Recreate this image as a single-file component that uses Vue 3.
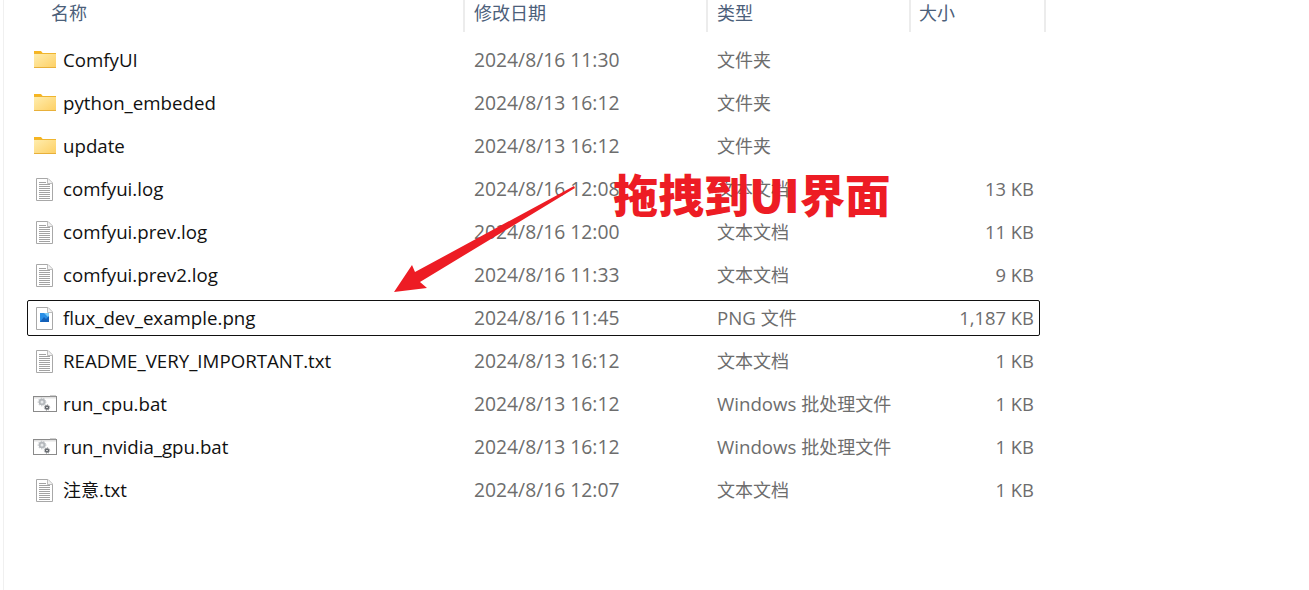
<script setup>
const files = [
  { name: 'ComfyUI', date: '2024/8/16 11:30', type: '文件夹', size: '', icon: 'folder' },
  { name: 'python_embeded', date: '2024/8/13 16:12', type: '文件夹', size: '', icon: 'folder' },
  { name: 'update', date: '2024/8/13 16:12', type: '文件夹', size: '', icon: 'folder' },
  { name: 'comfyui.log', date: '2024/8/16 12:08', type: '文本文档', size: '13 KB', icon: 'text' },
  { name: 'comfyui.prev.log', date: '2024/8/16 12:00', type: '文本文档', size: '11 KB', icon: 'text' },
  { name: 'comfyui.prev2.log', date: '2024/8/16 11:33', type: '文本文档', size: '9 KB', icon: 'text' },
  { name: 'flux_dev_example.png', date: '2024/8/16 11:45', typeLat: 'PNG ', type: '文件', size: '1,187 KB', icon: 'image', selected: true },
  { name: 'README_VERY_IMPORTANT.txt', date: '2024/8/13 16:12', type: '文本文档', size: '1 KB', icon: 'text' },
  { name: 'run_cpu.bat', date: '2024/8/13 16:12', typeLat: 'Windows ', type: '批处理文件', size: '1 KB', icon: 'bat' },
  { name: 'run_nvidia_gpu.bat', date: '2024/8/13 16:12', typeLat: 'Windows ', type: '批处理文件', size: '1 KB', icon: 'bat' },
  { name: '.txt', cjk: '注意', date: '2024/8/16 12:07', type: '文本文档', size: '1 KB', icon: 'text' }
]
const lineYs = [5, 7, 9, 11, 13, 15, 17, 19, 21]
</script>

<template>
  <div class="page">
    <div class="pane">
      <div class="head">
        <div class="hcell hname">名称</div>
        <div class="hcell hdate">修改日期</div>
        <div class="hcell htype">类型</div>
        <div class="hcell hsize">大小</div>
      </div>
      <div class="rows">
        <div v-for="f in files" :key="f.cjk ? f.cjk + f.name : f.name" class="row" :class="{ selected: f.selected }">
          <div class="iconbox">
            <svg v-if="f.icon === 'folder'" width="24" height="18" viewBox="0 0 24 18">
              <defs>
                <linearGradient id="fold" x1="0" y1="0" x2="1" y2="1">
                  <stop offset="0" stop-color="#ffeeb0" />
                  <stop offset="1" stop-color="#fdcf63" />
                </linearGradient>
              </defs>
              <path d="M1 0h7l2 2.5h-9z" fill="#f7b51f" />
              <rect x="1" y="2" width="22" height="15" fill="url(#fold)" />
              <rect x="1" y="2" width="22" height="1" fill="#efb52f" />
              <rect x="1" y="16" width="22" height="1" fill="#e8b03a" />
            </svg>
            <svg v-else-if="f.icon === 'text'" width="18" height="24" viewBox="0 0 18 24">
              <path d="M0.5 1.5h11.5l4.5 4.5v17.5h-16z" fill="#fff" stroke="#a8a8a8" />
              <path d="M11.5 1.5v5h5" fill="#f2f2f2" stroke="#bdbdbd" />
              <rect v-for="y in lineYs" :key="y" x="3" :y="y" :width="y < 7 ? 7 : 11" height="1" fill="#a2a2a2" />
            </svg>
            <svg v-else-if="f.icon === 'image'" width="18" height="24" viewBox="0 0 18 24">
              <path d="M0.5 1.5h11.5l4.5 4.5v17.5h-16z" fill="#fff" stroke="#a8a8a8" />
              <path d="M11.5 1.5v5h5" fill="#f2f2f2" stroke="#bdbdbd" />
              <rect x="4" y="7" width="9" height="9" fill="#2a8fe6" />
              <path d="M8 7h5v5z" fill="#7ccbf6" />
              <path d="M4 16l4-5 2 2 3-3v6z" fill="#1460b8" />
            </svg>
            <svg v-else width="24" height="18" viewBox="0 0 24 18">
              <rect x="0.5" y="1.5" width="23" height="15" fill="#fff" stroke="#8a8a8a" />
              <rect x="1" y="2" width="22" height="1.5" fill="#e2e2e2" />
              <rect x="17" y="0.5" width="6" height="1" fill="#a0a0a0" />
              <circle cx="9" cy="7" r="2.4" fill="#e8eaec" stroke="#b4b8bc" stroke-width="1.8" />
              <circle cx="9" cy="7" r="3.8" fill="none" stroke="#b4b8bc" stroke-width="1" stroke-dasharray="1.4 1.3" />
              <circle cx="14" cy="12.5" r="1.5" fill="#fff" stroke="#5d6166" stroke-width="1.4" />
              <circle cx="14" cy="12.5" r="2.7" fill="none" stroke="#5d6166" stroke-width="0.8" stroke-dasharray="1 1.1" />
            </svg>
          </div>
          <div class="name"><span v-if="f.cjk" class="cjk">{{ f.cjk }}</span>{{ f.name }}</div>
          <div class="date">{{ f.date }}</div>
          <div class="type">{{ f.typeLat }}<span class="cjk">{{ f.type }}</span></div>
          <div class="size">{{ f.size }}</div>
        </div>
      </div>
    </div>

    <svg class="arrow" width="1309" height="590" viewBox="0 0 1309 590">
      <polygon points="574,186 415,272 412,265 394,292 427,288 420,282 575,188" fill="#ed1c24" />
    </svg>
    <div class="callout">拖拽到UI界面</div>
  </div>
</template>

<style scoped>
.page {
  position: relative;
  width: 1309px;
  height: 590px;
  overflow: hidden;
  background: #fff;
  font-family: "Open Sans", "Noto Sans CJK SC", sans-serif;
  font-size: 18.7px;
}
.pane {
  margin-left: 3px;
  height: 590px;
  border-left: 1px solid #f0f0f0;
  box-sizing: border-box;
}
.head {
  display: flex;
  height: 32px;
  color: #4c607a;
  font-size: 18px;
  line-height: 24px;
}
.hcell {
  box-sizing: border-box;
  border-right: 2px solid #ececec;
  font-family: "Noto Sans CJK SC", sans-serif;
  white-space: nowrap;
}
.hname { width: 461px; padding-left: 47px; }
.hdate { width: 243px; padding-left: 9px; }
.htype { width: 203px; padding-left: 9px; }
.hsize { width: 135px; padding-left: 8px; }
.rows {
  display: flex;
  flex-direction: column;
  gap: 7px;
  padding-top: 10px;
}
.row {
  display: flex;
  align-items: center;
  height: 36px;
  width: 1013px;
  margin-left: 23px;
  box-sizing: border-box;
  border: 1px solid transparent;
  border-radius: 2px;
  line-height: 26px;
}
.row.selected { border-color: #111; }
.iconbox {
  width: 34px;
  display: flex;
  justify-content: center;
  flex: none;
  margin-left: 1px;
  padding-right: 2px;
  box-sizing: border-box;
}
.cjk {
  font-family: "Noto Sans CJK SC", sans-serif;
  font-size: 18px;
  line-height: 1;
}
.name { width: 411px; color: #111; flex: none; white-space: nowrap; }
.date { width: 243px; color: #6d6d6d; flex: none; white-space: nowrap; font-size: 19.3px; }
.type { width: 200px; color: #6d6d6d; flex: none; white-space: pre; }
.size { width: 117px; color: #6d6d6d; text-align: right; flex: none; white-space: nowrap; font-size: 18.4px; }
.arrow {
  position: absolute;
  left: 0;
  top: 0;
  pointer-events: none;
}
.callout {
  position: absolute;
  left: 613px;
  top: 162px;
  font-family: "Noto Sans CJK SC", sans-serif;
  font-weight: 900;
  font-size: 45.4px;
  line-height: 62px;
  color: #ed1c24;
  white-space: nowrap;
}
</style>
